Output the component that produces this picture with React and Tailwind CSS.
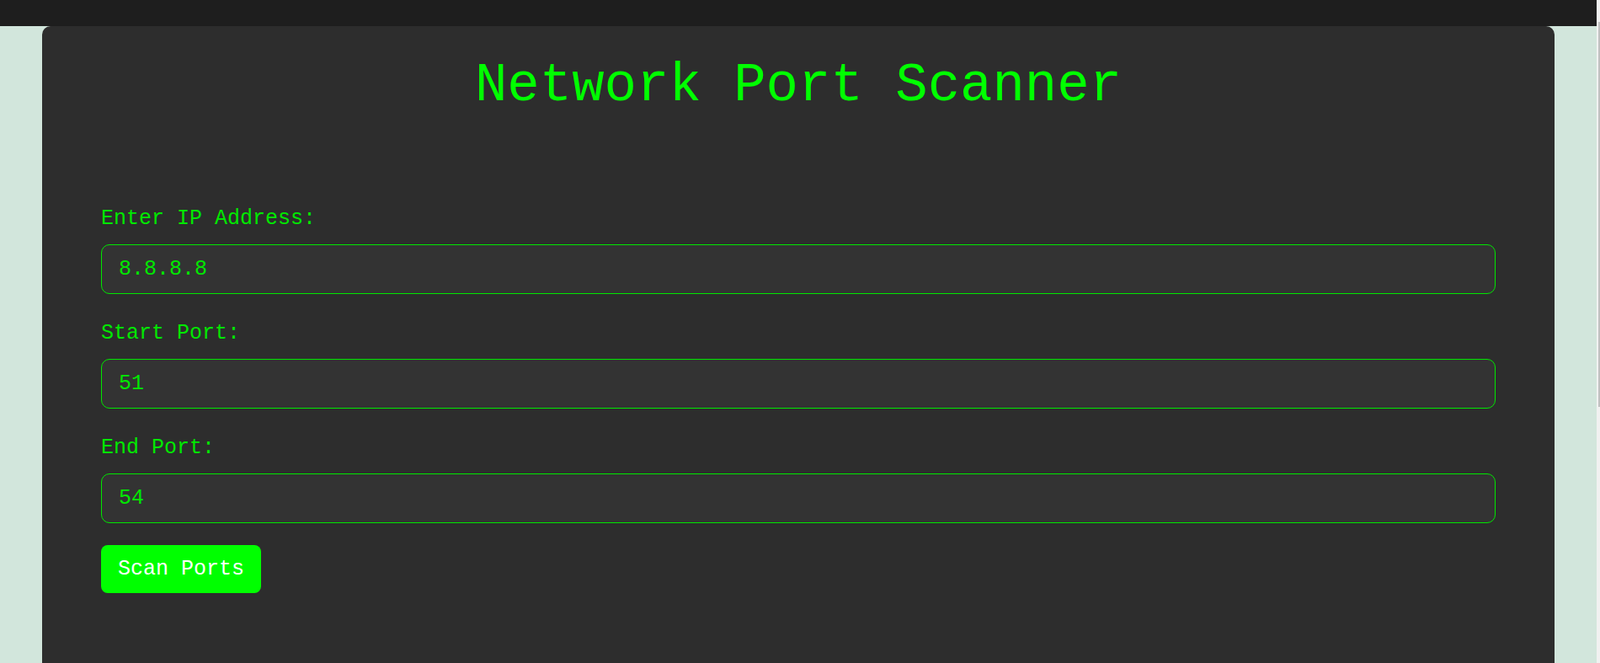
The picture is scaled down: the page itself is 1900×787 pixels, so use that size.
import { useState } from 'react'

// Port scanner form: IP + port range, one button. Green-on-dark terminal look.
const mono = { fontFamily: '"Liberation Mono", "Courier New", monospace' }

function Field({ label, value, onChange, first = false }) {
  return (
    <div className={first ? 'mt-[108px]' : 'mt-[33px]'}>
      <label className="block text-[25px] leading-[28px] text-[#00e800]">{label}</label>
      <input
        value={value}
        onChange={(e) => onChange(e.target.value)}
        style={mono}
        className="mt-[16px] block h-[59px] w-full rounded-[10px] border border-[#00e800] bg-[#333333] pl-[20px] text-[25px] text-[#00e800] outline-none"
      />
    </div>
  )
}

export default function App() {
  const [ip, setIp] = useState('8.8.8.8')
  const [start, setStart] = useState('51')
  const [end, setEnd] = useState('54')

  return (
    <div className="flex h-[787px] w-full overflow-hidden" style={mono}>
      <div className="flex flex-1 flex-col">
        <div className="h-[31px] bg-[#1e1e1e]" />
        <div className="flex flex-1 bg-[#d2e6dc] px-[50px]">
          <div className="flex-1 rounded-t-[10px] bg-[#2d2d2d] px-[70px] pt-[35px]">
            <h1 className="text-center text-[64px] leading-[72px] text-[#00ff00]">
              Network Port Scanner
            </h1>
            <Field first label="Enter IP Address:" value={ip} onChange={setIp} />
            <Field label="Start Port:" value={start} onChange={setStart} />
            <Field label="End Port:" value={end} onChange={setEnd} />
            <button
              style={mono}
              className="mt-[26px] h-[57px] rounded-[8px] bg-[#00ff00] px-[20px] text-[25px] text-white"
            >
              Scan Ports
            </button>
          </div>
        </div>
      </div>
      <div className="w-[4px] bg-[#f1f1f1] pt-[26px]">
        <div className="ml-[2px] h-[457px] w-[2px] bg-[#c1c1c1]" />
      </div>
    </div>
  )
}
